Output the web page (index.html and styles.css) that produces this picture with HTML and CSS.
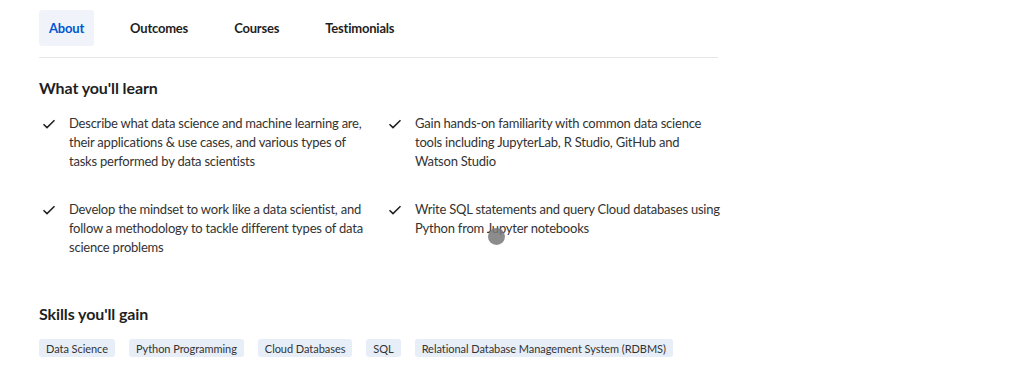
FILE: index.html
```html
<!DOCTYPE html>
<html lang="en">
<head>
<meta charset="utf-8">
<title>About</title>
<link rel="stylesheet" href="styles.css">
</head>
<body>
<div class="page">
  <nav class="tabs">
    <a class="tab active">About</a>
    <a class="tab">Outcomes</a>
    <a class="tab">Courses</a>
    <a class="tab">Testimonials</a>
  </nav>

  <section class="learn">
    <h2 class="heading">What you'll learn</h2>
    <ul class="learn-grid">
      <li class="learn-item">
        <svg class="check" viewBox="0 0 14 14"><path d="M1.5 7.2 L5 10.6 L12.5 3.2" fill="none" stroke="#1f1f1f" stroke-width="1.5"/></svg>
        <span>Describe what data science and machine learning are, their applications &amp; use cases, and various types of tasks performed by data scientists</span>
      </li>
      <li class="learn-item">
        <svg class="check" viewBox="0 0 14 14"><path d="M1.5 7.2 L5 10.6 L12.5 3.2" fill="none" stroke="#1f1f1f" stroke-width="1.5"/></svg>
        <span>Gain hands-on familiarity with common data science tools including JupyterLab, R Studio, GitHub and Watson Studio</span>
      </li>
      <li class="learn-item">
        <svg class="check" viewBox="0 0 14 14"><path d="M1.5 7.2 L5 10.6 L12.5 3.2" fill="none" stroke="#1f1f1f" stroke-width="1.5"/></svg>
        <span>Develop the mindset to work like a data scientist, and follow a methodology to tackle different types of data science problems</span>
      </li>
      <li class="learn-item">
        <svg class="check" viewBox="0 0 14 14"><path d="M1.5 7.2 L5 10.6 L12.5 3.2" fill="none" stroke="#1f1f1f" stroke-width="1.5"/></svg>
        <span>Write SQL statements and query Cloud databases using Python from Jupyter notebooks</span>
      </li>
    </ul>
    <div class="touch"></div>
  </section>

  <section class="skills">
    <h2 class="heading">Skills you'll gain</h2>
    <ul class="chips">
      <li class="chip">Data Science</li>
      <li class="chip">Python Programming</li>
      <li class="chip">Cloud Databases</li>
      <li class="chip">SQL</li>
      <li class="chip">Relational Database Management System (RDBMS)</li>
    </ul>
  </section>
</div>
</body>
</html>
```

FILE: styles.css
```css
* { box-sizing: border-box; }
html, body { margin: 0; padding: 0; background: #fff; }
body {
  font-family: "Source Sans Pro", Lato, "Noto Sans", sans-serif;
  color: #333;
}
.page {
  width: 679px;
  margin-left: 39px;
  padding-top: 10px;
}
.tabs {
  display: flex;
  gap: 26px;
  border-bottom: 1px solid #e5e7eb;
  padding-bottom: 11px;
}
.tab {
  display: flex;
  align-items: center;
  height: 36px;
  padding: 0 10px;
  font-size: 13px;
  font-weight: 700;
  letter-spacing: -0.2px;
  color: #1f1f1f;
  border-radius: 3px;
}
.tab.active {
  background: #f0f4fa;
  color: #0056d2;
}
.heading {
  margin: 0;
  font-size: 16px;
  line-height: 24px;
  font-weight: 700;
  letter-spacing: -0.1px;
  color: #1f1f1f;
}
.learn {
  position: relative;
  padding-top: 18px;
}
.learn-grid {
  list-style: none;
  margin: 14px 0 0;
  padding: 0;
  display: grid;
  grid-template-columns: 336px 336px;
  column-gap: 10px;
  row-gap: 29px;
}
.learn-item {
  display: flex;
  gap: 13px;
  padding-left: 3px;
  font-size: 13px;
  line-height: 19px;
  letter-spacing: -0.22px;
  color: #333;
}
.check {
  flex: none;
  width: 14px;
  height: 14px;
  margin-top: 3px;
}
.touch {
  position: absolute;
  left: 449px;
  top: 170px;
  width: 17px;
  height: 17px;
  border-radius: 50%;
  background: rgba(120, 120, 120, 0.85);
}
.skills {
  padding-top: 45px;
}
.chips {
  list-style: none;
  margin: 13px 0 0;
  padding: 0;
  display: flex;
  gap: 14px;
}
.chip {
  height: 18px;
  padding: 0 7px;
  display: flex;
  align-items: center;
  font-size: 11px;
  letter-spacing: -0.05px;
  color: #333;
  background: #e8eef7;
  border-radius: 3px;
}
```
